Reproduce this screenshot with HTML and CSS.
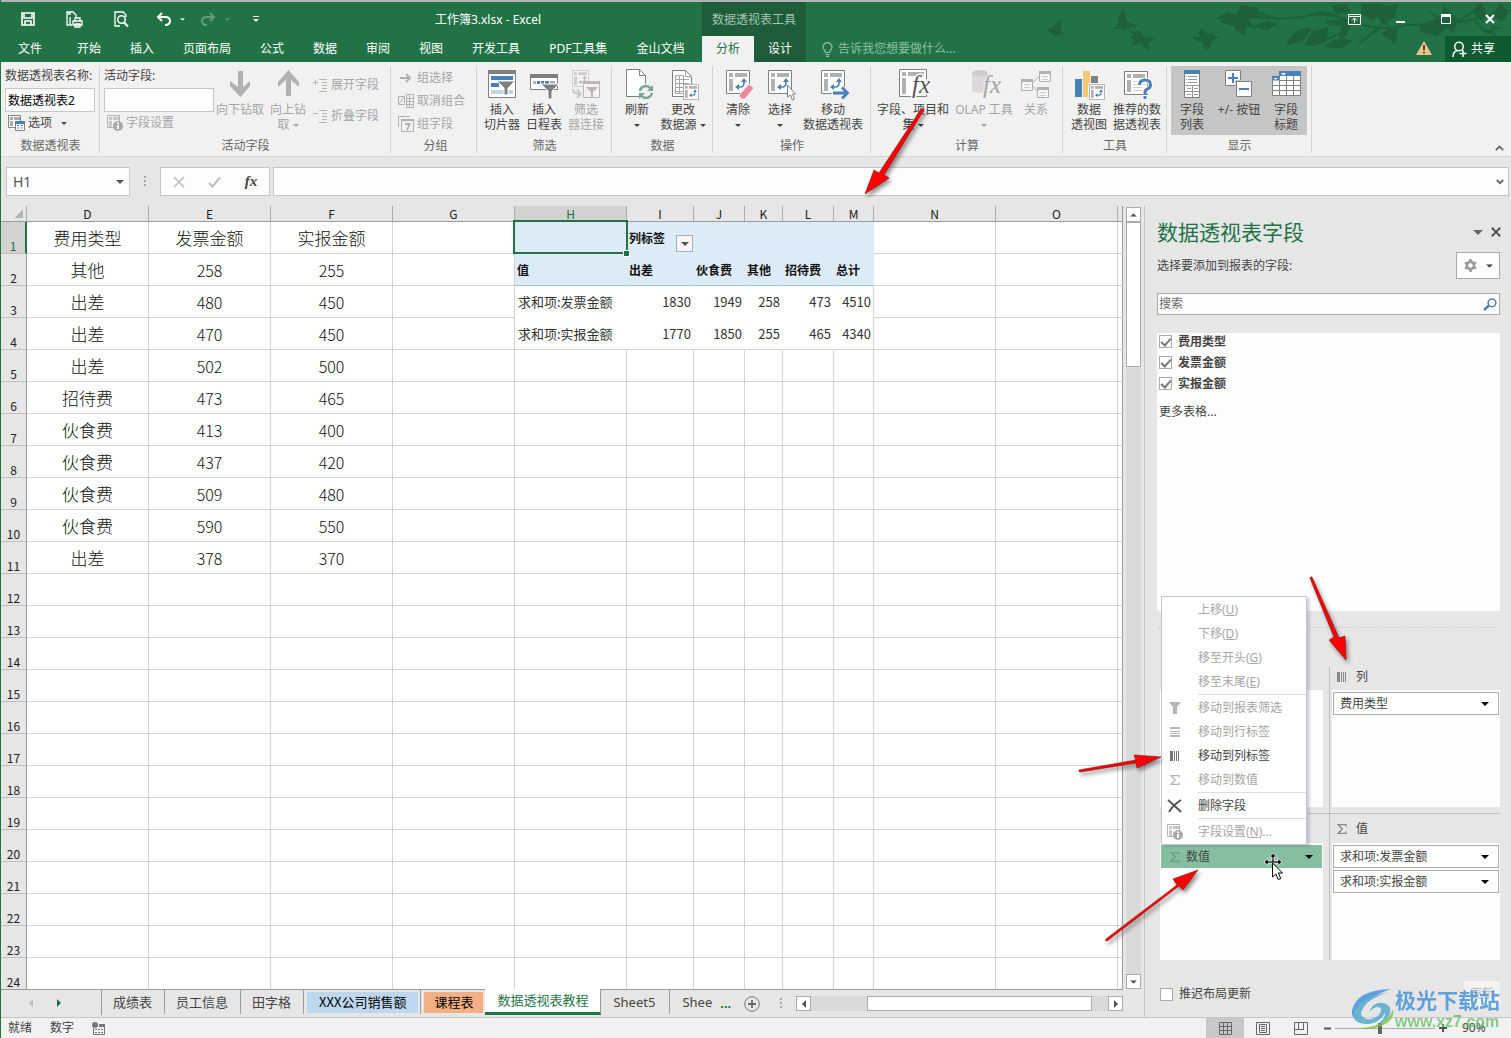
FILE: index.html
```html
<!DOCTYPE html>
<html lang="zh-CN">
<head>
<meta charset="utf-8">
<title>工作簿3.xlsx - Excel</title>
<link rel="stylesheet" href="styles.css">
</head>
<body>
<svg class="defs" width="0" height="0" aria-hidden="true">
  <symbol id="pivot" viewBox="0 0 24 24"><path d="M.5.5h23v23H.5z" fill="#fff" stroke="#808080"/><path d="M3 3h4v4H3zM9 3h12v4H9zM3 9h4v12H3z" fill="#b1b1b1"/><path d="M18 11v2q0 4-4 4h-3" fill="none" stroke="#4a80b8" stroke-width="1.6"/><path d="M18 8l3 4h-6zM9 17l4-3v6z" fill="#4a80b8"/></symbol>
  <symbol id="pivot-grey" viewBox="0 0 24 24"><path d="M.5.5h23v23H.5z" fill="#f3f1f3" stroke="#b9b5b9"/><path d="M3 3h4v4H3zM9 3h12v4H9zM3 9h4v12H3z" fill="#cfcbcf"/><path d="M18 11v2q0 4-4 4h-3" fill="none" stroke="#b9b5b9" stroke-width="1.6"/><path d="M18 8l3 4h-6zM9 17l4-3v6z" fill="#b9b5b9"/></symbol>
  <symbol id="down" viewBox="0 0 8 4"><path d="M0 0h8L4 4z" fill="currentColor"/></symbol>
  <symbol id="bars" viewBox="0 0 10 10"><path d="M0 0h3v10H0zM4 0h1v10H4zM6 0h1v10H6zM8 0h1v10H8z" fill="currentColor"/></symbol>
  <symbol id="sigma" viewBox="0 0 10 10"><path d="M9 2.500V.5H1L5.200 5 1 9.500h8v-2" fill="none" stroke="currentColor" stroke-width="1.300"/></symbol>
  <symbol id="info" viewBox="0 0 16 16"><path d="M.5.5h12v12H.5z" fill="none" stroke="#b5b5b5"/><path d="M2 2h3v3H2zM6 2h6v3H6zM2 6h3v6H2z" fill="#c9c5c9"/><circle cx="11" cy="11" r="5" fill="#a9a9a9"/><path d="M10 7.500h2v1.500h-2zM10 10h2v4h-2z" fill="#fff"/></symbol>
</svg>

<div class="window">
<header class="top">
  <svg class="deco" viewBox="0 0 480 60" aria-hidden="true">
    <g fill="#1d6039">
      <path d="M17 27q5-1 7-5 3-4 6-5-1 7 0 11l3 4-6 1-3 2-1-2-6-4z"/>
      <path d="M81 26q5 0 6-5 0-8 5-14 3 6 4 13 4-1 4 2l7 2-6 1-5 2-6 3 1-4q-5 2-10 0z"/>
      <path d="M97 27l6 3q3-2 6-1 3 6 6 7l10-1q-2 5-8 6l1 7q-6-1-9-7-5 3-10 2l6-5-6-2 3-3z"/>
      <path d="M162 35q5-1 7 1-2-6 0-9 4 0 7 5 5-1 7 2l6 1-6 2-2 2q-1 6-5 9-5-3-4-9-5 2-10-3z"/>
      <path d="M185 16l12-6 8 3 5-10 7 1 10 11-10 2 7 10-13-5 3 11-10-8-7-2-6-5z"/>
      <path d="M214 4l12 2 4 8-10-2zM222 24l14-5 10 3-10 7zM204 20l12 2-3 12-9-6z"/>
      <path d="M273 43l8-14 16-4-1 14-12 5zM256 41q5-14 24-16-2 15-24 18zM293 44q14-12 28-5-10 11-28 5zM300 4l15-2 5 9-14 1zM311 24q-5 10-2 14 14-9 9-20-15-2-25 2 7 6 16 3z"/>
      <path d="M330 2h22l-2 10-9 6-11-6zM349 5l18-3-3 13-14 8zM350 32l10-8 7 4-3 14zM390 22l19-6 13 4-16 14-18-4zM396 8l17 9-2-14 15 13-3 16zM440 9l10-8 5 8-3 12zM460 14l10-13 8 10-7 9zM452 28l14 7-6-12 12 4z"/>
    </g>
    <path d="M190 20q28-6 50-4t44-4q20 0 42 9t50 2q30 0 52-3t52-12M240 15q-15-6-25-7M286 10q15-1 34 11M320 22q-16 15-34 18M350 24l-22 18M426 20l22-14M444 20q8 8 14 12M340 2q6 14 18 22" fill="none" stroke="#1d6039" stroke-width="2"/>
  </svg>
  <div class="titlebar">
    <div class="titlebar-left">
      <div class="qat">
        <button aria-label="保存"><svg width="14" height="14" viewBox="0 0 14 14"><path d="M1 1h12v12H1zM3 1v5h8V1M4 13V9h6v4" fill="none" stroke="#fff" stroke-width="1.600"/></svg></button>
        <button aria-label="快速打印"><svg width="17" height="17" viewBox="0 0 17 17"><path d="M3 14H1V1h6l3 3v3M4 1v2H2M4 6v8h2M7 10h9v4H7zM9 10V7h5v3M9 13h5v3H9z" fill="none" stroke="#fff" stroke-width="1.300"/></svg></button>
        <button aria-label="打印预览"><svg width="15" height="17" viewBox="0 0 15 17"><path d="M12 6V4L9 1H1v14h5" fill="none" stroke="#fff" stroke-width="1.300"/><circle cx="7.500" cy="8.500" r="3.800" fill="none" stroke="#fff" stroke-width="1.500"/><path d="M10 11.500l4 4" stroke="#fff" stroke-width="2.200"/></svg></button>
        <button aria-label="撤消" class="pair"><svg width="15" height="14" viewBox="0 0 15 14"><path d="M2 5h7q5 0 5 4t-5 4M6 1L2 5l4 4" fill="none" stroke="#fff" stroke-width="2"/></svg><svg width="5" height="3" viewBox="0 0 8 4"><use href="#down"/></svg></button>
        <button aria-label="恢复" class="pair faded"><svg width="15" height="14" viewBox="0 0 15 14"><path d="M13 5H6Q1 5 1 9t5 4M9 1l4 4-4 4" fill="none" stroke="#fff" stroke-width="2"/></svg><svg width="5" height="3" viewBox="0 0 8 4"><use href="#down"/></svg></button>
        <button aria-label="自定义快速访问工具栏"><svg width="6" height="7" viewBox="0 0 6 7"><path d="M0 0h6v1H0zM0 3h6L3 6z" fill="#fff"/></svg></button>
      </div>
      <div class="doc-title">工作簿3.xlsx - Excel</div>
    </div>
    <div class="ctx-title">数据透视表工具</div>
    <div class="win-buttons">
      <button aria-label="功能区显示选项"><svg width="13" height="11" viewBox="0 0 13 11"><path d="M.5.500h12v10H.5zM0 2.500h13M6.500 9V4M4 6.500L6.500 4 9 6.500" fill="none" stroke="#fff"/></svg></button>
      <button aria-label="最小化"><svg width="9" height="11" viewBox="0 0 9 11"><path d="M0 7h9v2H0z" fill="#fff"/></svg></button>
      <button aria-label="最大化"><svg width="10" height="10" viewBox="0 0 10 10"><path d="M.5.500h9v9h-9z" fill="none" stroke="#fff"/><path d="M0 0h10v3H0z" fill="#fff"/></svg></button>
      <button aria-label="关闭"><svg width="10" height="10" viewBox="0 0 10 10"><path d="M1 1l8 8M9 1L1 9" stroke="#fff" stroke-width="2.200"/></svg></button>
    </div>
  </div>
  <nav class="tabs">
    <div class="tabs-main">
      <button class="file">文件</button><button>开始</button><button>插入</button><button>页面布局</button><button>公式</button><button>数据</button><button>审阅</button><button>视图</button><button>开发工具</button><button>PDF工具集</button><button>金山文档</button>
    </div>
    <div class="tabs-ctx"><button class="active">分析</button><button>设计</button></div>
    <button class="tellme"><svg width="11" height="15" viewBox="0 0 11 15"><path d="M3.500 10.500Q3.500 9 2 7.500A4.300 4.300 0 1 1 9 7.500Q7.500 9 7.500 10.500zM3.500 12.500h4M4 14.300h3" fill="none" stroke="#8fc0a2" stroke-width="1.200"/></svg>告诉我您想要做什么...</button>
    <svg class="warn" width="16" height="14" viewBox="0 0 16 14"><path d="M8 0l8 14H0z" fill="#f2c285"/><path d="M7 4h2v5H7zM7 10.500h2v2H7z" fill="#4a4a4a"/></svg>
    <button class="share"><svg width="15" height="17" viewBox="0 0 15 17"><circle cx="7" cy="5.500" r="4.300" fill="none" stroke="#fff" stroke-width="1.500"/><path d="M1 16q0-6 5-6.500M11 9v7M7.500 12.500h7" fill="none" stroke="#fff" stroke-width="1.500"/></svg>共享</button>
  </nav>
</header>

<section class="ribbon">
  <div class="group g-name">
    <div class="stack">
      <label for="ptname">数据透视表名称:</label>
      <input id="ptname" type="text" value="数据透视表2">
      <button class="small"><svg width="17" height="16" viewBox="0 0 17 16"><path d="M.5.500h12v12H.5z" fill="#fff" stroke="#808080"/><path d="M2 2h3v3H2zM6 2h6v3H6zM2 6h3v5H2z" fill="#aaa"/><path d="M7.500 6.500h9v9h-9z" fill="#fff" stroke="#808080"/><path d="M7 6h10v3H7z" fill="#4a80b8"/><path d="M9 10.500h2M12.500 10.500h2M9 13h2M12.500 13h2" stroke="#4a80b8"/></svg>选项<svg class="caret" width="6" height="3" viewBox="0 0 8 4"><use href="#down"/></svg></button>
    </div>
    <h2>数据透视表</h2>
  </div>
  <div class="group g-active">
    <div class="items">
      <div class="stack">
        <label for="actfield">活动字段:</label>
        <input id="actfield" type="text">
        <button class="small off indent"><svg width="16" height="16"><use href="#info"/></svg>字段设置</button>
      </div>
      <button class="big off w48"><svg width="32" height="32" viewBox="0 0 32 32"><path d="M14 2h5v16l7-6v5L16.500 28 6 17v-5l8 6z" fill="#b1b1b1"/></svg>向下钻取</button>
      <button class="big off w48"><svg width="32" height="32" viewBox="0 0 32 32"><path d="M14 27h5V11l8 7v-5L16.500 1 6 13v5l8-7z" fill="#b1b1b1"/></svg>向上钻<br>取 <svg class="caret" width="6" height="3" viewBox="0 0 8 4"><use href="#down"/></svg></button>
      <div class="pairs">
        <button class="small off"><svg width="15" height="14" viewBox="0 0 15 14"><path d="M0 4.500h5M2.500 2v5M6 1.500h8M9 4.500h5M9 7.500h5M9 10.500h5M6 13.500h8" fill="none" stroke="#b5b5b5"/></svg>展开字段</button>
        <button class="small off"><svg width="15" height="14" viewBox="0 0 15 14"><path d="M0 4.500h5M6 1.500h8M9 4.500h5M9 7.500h5M9 10.500h5M6 13.500h8" fill="none" stroke="#b5b5b5"/></svg>折叠字段</button>
      </div>
    </div>
    <h2>活动字段</h2>
  </div>
  <div class="group g-group">
    <div class="stack three">
      <button class="small off"><svg width="16" height="14" viewBox="0 0 16 14"><path d="M2 7h9M8 3l4 4-4 4" fill="none" stroke="#b1b1b1" stroke-width="2"/></svg>组选择</button>
      <button class="small off"><svg width="16" height="14" viewBox="0 0 16 14"><path d="M.5 2.500h6v8h-6zM1 10l5-7M8.500.500h7v13h-7zM8 4.500h8M8 7.500h8M8 10.500h8M11.500 1v12" fill="none" stroke="#b1b1b1"/></svg>取消组合</button>
      <button class="small off"><svg width="16" height="16" viewBox="0 0 16 16"><path d="M.5 11V.5H12M3.500 4.500h12v11h-12z" fill="none" stroke="#b1b1b1"/><path d="M3 3h13v2H3z" fill="#b1b1b1"/><path d="M7 8h4.500L9 14" fill="none" stroke="#a5a5a5" stroke-width="1.500"/></svg>组字段</button>
    </div>
    <h2>分组</h2>
  </div>
  <div class="group g-filter">
    <div class="items">
      <button class="big w42"><svg width="32" height="32" viewBox="0 0 32 32"><path d="M2.500 1.500h27v27h-27z" fill="#fff" stroke="#808080"/><path d="M2 1h28v4H2z" fill="#808080"/><path d="M5 7h22v4H5zM5 14h8v4H5z" fill="#4a80b8"/><path d="M5 21h22v4H5z" fill="#bdd3e8"/><path d="M11 12h18l-7 7v7h-4v-7z" fill="#808080" stroke="#fff"/></svg>插入<br>切片器</button>
      <button class="big w42"><svg width="32" height="32" viewBox="0 0 32 32"><path d="M2.500 5.500h27v15h-27z" fill="#fff" stroke="#808080"/><path d="M2 5h28v4H2z" fill="#808080"/><path d="M5 12h3v3H5zM22 12h5v3h-5z" fill="#b1b1b1"/><path d="M9 12h3v3H9zM13 12h3v3h-3zM17 12h4v3h-4z" fill="#4a80b8"/><path d="M13 15h18l-7 7v8h-4v-8z" fill="#808080" stroke="#fff"/></svg>插入<br>日程表</button>
      <button class="big off w42"><svg width="32" height="32" viewBox="0 0 32 32"><use href="#pivot-grey" x="2" y="1" width="17" height="17"/><path d="M13.500 12.500h16v16h-16z" fill="#f3f1f3" stroke="#b9b5b9"/><path d="M13 12h17v3H13z" fill="#b9b5b9"/><path d="M16 18h12l-5 5v5h-2v-5z" fill="#b9b5b9"/><path d="M3 20q0 5 7 5M7 21l4 4-4 4" fill="none" stroke="#c9c5c9" stroke-width="2"/></svg>筛选<br>器连接</button>
    </div>
    <h2>筛选</h2>
  </div>
  <div class="group g-data">
    <div class="items">
      <button class="big w44"><svg width="32" height="32" viewBox="0 0 32 32"><path d="M5.500.500h13l6 6v21h-19z" fill="#fff" stroke="#808080"/><path d="M18.500.500v6h6" fill="none" stroke="#808080"/><circle cx="25" cy="23" r="8" fill="#f1f1f1"/><path d="M19 22a6 6 0 0 1 11-2M31 24a6 6 0 0 1-11 2" fill="none" stroke="#76a797" stroke-width="2.400"/><path d="M32 16v6h-6zM18 30v-6h6z" fill="#76a797"/></svg>刷新<br><svg class="caret" width="6" height="3" viewBox="0 0 8 4"><use href="#down"/></svg></button>
      <button class="big w48"><svg width="32" height="32" viewBox="0 0 32 32"><path d="M5.500 1.500h13l6 6v20h-19z" fill="#fff" stroke="#808080"/><path d="M18.500 1.500v6h6M8.500 6.500h8v18h-8zM8 10.500h14M8 14.500h14M8 18.500h12M8 22.500h8M12.500 6v18" fill="none" stroke="#a5a5a5"/><use href="#pivot" x="16" y="15" width="16" height="16"/></svg>更改<br>数据源 <svg class="caret" width="6" height="3" viewBox="0 0 8 4"><use href="#down"/></svg></button>
    </div>
    <h2>数据</h2>
  </div>
  <div class="group g-ops">
    <div class="items">
      <button class="big w42"><svg width="32" height="32" viewBox="0 0 32 32"><use href="#pivot" x="4" y="1" width="24" height="24"/><path d="M17 26l10-11 5 4-9 11h-4z" fill="#e8889a" stroke="#f1f1f1"/></svg>清除<br><svg class="caret" width="6" height="3" viewBox="0 0 8 4"><use href="#down"/></svg></button>
      <button class="big w42"><svg width="32" height="32" viewBox="0 0 32 32"><use href="#pivot" x="4" y="1" width="24" height="24"/><path d="M23.500 16v12l3-2 2 5 2-1-2-5h3z" fill="#fff" stroke="#808080"/></svg>选择<br><svg class="caret" width="6" height="3" viewBox="0 0 8 4"><use href="#down"/></svg></button>
      <button class="big w64"><svg width="32" height="32" viewBox="0 0 32 32"><use href="#pivot" x="4" y="1" width="24" height="24"/><path d="M15 24h14M24 18l6 6-6 6" fill="none" stroke="#f1f1f1" stroke-width="5"/><path d="M16 24h14M25 18.500l5.500 5.500-5.500 5.500" fill="none" stroke="#4a80b8" stroke-width="2.800"/></svg>移动<br>数据透视表</button>
    </div>
    <h2>操作</h2>
  </div>
  <div class="group g-calc">
    <div class="items">
      <button class="big w76"><svg width="32" height="32" viewBox="0 0 32 32"><path d="M2.500.500h27v27h-27z" fill="#fff" stroke="#808080"/><path d="M5 3h4v4H5zM11 3h16v4H11zM5 9h4v16H5z" fill="#b1b1b1"/><text x="15" y="24" class="fx" fill="#555" stroke="#fff" stroke-width="3" paint-order="stroke">fx</text></svg>字段、项目和<br>集 <svg class="caret" width="6" height="3" viewBox="0 0 8 4"><use href="#down"/></svg></button>
      <button class="big off w66"><svg width="32" height="32" viewBox="0 0 32 32"><path d="M4 4v17a8 3 0 0 0 16 0V4z" fill="#dcd8dc"/><ellipse cx="12" cy="4" rx="8" ry="3" fill="#cfcbcf"/><text x="15" y="24" class="fx" fill="#a5a5a5" stroke="#f1f1f1" stroke-width="2" paint-order="stroke">fx</text></svg>OLAP 工具<br><svg class="caret" width="6" height="3" viewBox="0 0 8 4"><use href="#down"/></svg></button>
      <button class="big off w38"><svg width="32" height="32" viewBox="0 0 32 32"><path d="M12 14l7-6M12 16l6 7" stroke="#b1b1b1"/><path d="M1.500 10.500h11v11h-11zM19.500 2.500h11v10h-11zM17.500 18.500h11v10h-11z" fill="#f5f3f5" stroke="#b1b1b1"/><path d="M1 10h12v3H1zM19 2h12v3H19zM17 18h12v3H17z" fill="#b1b1b1"/><path d="M4 15.500h6M4 18.500h6M22 7.500h6M22 10.500h6M20 23.500h6M20 26.500h6" stroke="#cfcbcf"/></svg>关系</button>
    </div>
    <h2>计算</h2>
  </div>
  <div class="group g-tools">
    <div class="items">
      <button class="big w44"><svg width="32" height="32" viewBox="0 0 32 32"><path d="M2 10h7v18H2z" fill="#4a80b8"/><path d="M10 2h7v26h-7z" fill="#f0c878"/><path d="M18 7h7v8h-7z" fill="#808080"/><path d="M15 14h17v18H15z" fill="#f1f1f1"/><use href="#pivot" x="16" y="15" width="16" height="16"/></svg>数据<br>透视图</button>
      <button class="big w52"><svg width="32" height="32" viewBox="0 0 32 32"><path d="M3.500 2.500h23v23h-23z" fill="#fff" stroke="#808080"/><path d="M6 5h4v4H6zM12 5h12v4H12zM6 11h4v12H6z" fill="#b1b1b1"/><path d="M12 12.500h12M12 15.500h12M12 18.500h9M12 21.500h9" stroke="#cfcfcf"/><path d="M18.500 16q0-5 5.500-5t5.500 5q0 3-3 5t-2.500 4M24 27.500v3" fill="none" stroke="#fff" stroke-width="5"/><path d="M18.500 16q0-5 5.500-5t5.500 5q0 3-3 4t-2.500 5M24 27v3" fill="none" stroke="#4a80b8" stroke-width="3"/></svg>推荐的数<br>据透视表</button>
    </div>
    <h2>工具</h2>
  </div>
  <div class="group g-show">
    <div class="items pressed">
      <button class="big w42"><svg width="32" height="32" viewBox="0 0 32 32"><path d="M8.500 1.500h15v27h-15z" fill="#fff" stroke="#808080"/><path d="M8 1h16v4H8z" fill="#4a80b8"/><path d="M10 7.500h1M12 7.500h9M10 10.500h1M12 10.500h9M10 13.500h1M12 13.500h9M9 16.500h14M9 22.500h14M16.500 17v11M11 19.500h4M18 19.500h4M11 25.500h4M18 25.500h4" stroke="#999"/></svg>字段<br>列表</button>
      <button class="big w52"><svg width="32" height="32" viewBox="0 0 32 32"><path d="M2.500 1.500h15v15h-15z" fill="#fff" stroke="#808080"/><path d="M12 11h18v19H12z" fill="#c5c5c5"/><path d="M13.500 12.500h15v15h-15z" fill="#fff" stroke="#808080"/><path d="M5 9h10M10 4v10M16 20h10" stroke="#4a80b8" stroke-width="2"/></svg>+/- 按钮</button>
      <button class="big w42"><svg width="32" height="32" viewBox="0 0 32 32"><path d="M9 2h22v5H9zM2 7h7v5H2z" fill="#4a80b8"/><path d="M2.500 11.500h28v15h-28zM9 7h21v5H9z" fill="#fff"/><path d="M2.500 11v15.500h28V7M2 16.500h28M2 21.500h28M9.500 7v19M16.500 7v19M23.500 7v19M9 11.500h21" fill="none" stroke="#808080"/><path d="M11 4h5l-2.500 2.500zM3.500 9h4l-2 2z" fill="#fff"/></svg>字段<br>标题</button>
    </div>
    <h2>显示</h2>
  </div>
  <button class="collapse" aria-label="折叠功能区"><svg width="9" height="6" viewBox="0 0 9 6"><path d="M.8 5.200L4.500 1.500l3.700 3.700" fill="none" stroke="#666" stroke-width="1.800"/></svg></button>
</section>

<section class="formula">
  <div class="namebox"><input type="text" aria-label="名称框" value="H1"><button aria-label="展开名称框"><svg width="8" height="4"><use href="#down"/></svg></button></div>
  <div class="grip"></div>
  <div class="fbuttons">
    <button aria-label="取消"><svg width="12" height="12" viewBox="0 0 12 12"><path d="M1 1l10 10M11 1L1 11" stroke="#bdbdbd" stroke-width="1.600"/></svg></button>
    <button aria-label="输入"><svg width="13" height="12" viewBox="0 0 13 12"><path d="M1 7l3.500 3.500L12 1.500" fill="none" stroke="#bdbdbd" stroke-width="2"/></svg></button>
    <button class="fxbtn">fx</button>
  </div>
  <div class="fbox"><input type="text" aria-label="编辑栏"><button aria-label="展开编辑栏"><svg width="8" height="6" viewBox="0 0 8 6"><path d="M.8 1l3.200 3.200L7.200 1" fill="none" stroke="#666" stroke-width="1.800"/></svg></button></div>
</section>

<main class="work">
  <div class="book">
    <div class="sheet">
      <div class="grid">
      <table>
        <colgroup><col class="c-num"><col class="c-122"><col class="c-122"><col class="c-122"><col class="c-122"><col class="c-h"><col class="c-i"><col class="c-j"><col class="c-k"><col class="c-j"><col class="c-m"><col class="c-122"><col class="c-122"><col></colgroup>
        <thead><tr><th class="corner"></th><th>D</th><th>E</th><th>F</th><th>G</th><th class="sel">H</th><th>I</th><th>J</th><th>K</th><th>L</th><th>M</th><th>N</th><th>O</th><th></th></tr></thead>
        <tbody>
        <tr><th class="sel">1</th><td>费用类型</td><td>发票金额</td><td>实报金额</td><td></td><td class="ph cell-sel"></td><td class="ph">列标签<button class="filter" aria-label="筛选列标签"><svg width="8" height="4"><use href="#down"/></svg></button></td><td class="ph"></td><td class="ph"></td><td class="ph"></td><td class="ph"></td><td></td><td></td><td></td></tr>
        <tr><th>2</th><td>其他</td><td class="n">258</td><td class="n">255</td><td></td><td class="ph line">值</td><td class="ph line">出差</td><td class="ph line">伙食费</td><td class="ph line">其他</td><td class="ph line">招待费</td><td class="ph line">总计</td><td></td><td></td><td></td></tr>
        <tr><th>3</th><td>出差</td><td class="n">480</td><td class="n">450</td><td></td><td class="pl">求和项:发票金额</td><td class="pv">1830</td><td class="pv">1949</td><td class="pv">258</td><td class="pv">473</td><td class="pv end">4510</td><td></td><td></td><td></td></tr>
        <tr class="last"><th>4</th><td>出差</td><td class="n">470</td><td class="n">450</td><td></td><td class="pl">求和项:实报金额</td><td class="pv">1770</td><td class="pv">1850</td><td class="pv">255</td><td class="pv">465</td><td class="pv end">4340</td><td></td><td></td><td></td></tr>
        <tr><th>5</th><td>出差</td><td class="n">502</td><td class="n">500</td><td></td><td></td><td></td><td></td><td></td><td></td><td></td><td></td><td></td><td></td></tr>
        <tr><th>6</th><td>招待费</td><td class="n">473</td><td class="n">465</td><td></td><td></td><td></td><td></td><td></td><td></td><td></td><td></td><td></td><td></td></tr>
        <tr><th>7</th><td>伙食费</td><td class="n">413</td><td class="n">400</td><td></td><td></td><td></td><td></td><td></td><td></td><td></td><td></td><td></td><td></td></tr>
        <tr><th>8</th><td>伙食费</td><td class="n">437</td><td class="n">420</td><td></td><td></td><td></td><td></td><td></td><td></td><td></td><td></td><td></td><td></td></tr>
        <tr><th>9</th><td>伙食费</td><td class="n">509</td><td class="n">480</td><td></td><td></td><td></td><td></td><td></td><td></td><td></td><td></td><td></td><td></td></tr>
        <tr><th>10</th><td>伙食费</td><td class="n">590</td><td class="n">550</td><td></td><td></td><td></td><td></td><td></td><td></td><td></td><td></td><td></td><td></td></tr>
        <tr><th>11</th><td>出差</td><td class="n">378</td><td class="n">370</td><td></td><td></td><td></td><td></td><td></td><td></td><td></td><td></td><td></td><td></td></tr>
        <tr><th>12</th><td></td><td></td><td></td><td></td><td></td><td></td><td></td><td></td><td></td><td></td><td></td><td></td><td></td></tr>
        <tr><th>13</th><td></td><td></td><td></td><td></td><td></td><td></td><td></td><td></td><td></td><td></td><td></td><td></td><td></td></tr>
        <tr><th>14</th><td></td><td></td><td></td><td></td><td></td><td></td><td></td><td></td><td></td><td></td><td></td><td></td><td></td></tr>
        <tr><th>15</th><td></td><td></td><td></td><td></td><td></td><td></td><td></td><td></td><td></td><td></td><td></td><td></td><td></td></tr>
        <tr><th>16</th><td></td><td></td><td></td><td></td><td></td><td></td><td></td><td></td><td></td><td></td><td></td><td></td><td></td></tr>
        <tr><th>17</th><td></td><td></td><td></td><td></td><td></td><td></td><td></td><td></td><td></td><td></td><td></td><td></td><td></td></tr>
        <tr><th>18</th><td></td><td></td><td></td><td></td><td></td><td></td><td></td><td></td><td></td><td></td><td></td><td></td><td></td></tr>
        <tr><th>19</th><td></td><td></td><td></td><td></td><td></td><td></td><td></td><td></td><td></td><td></td><td></td><td></td><td></td></tr>
        <tr><th>20</th><td></td><td></td><td></td><td></td><td></td><td></td><td></td><td></td><td></td><td></td><td></td><td></td><td></td></tr>
        <tr><th>21</th><td></td><td></td><td></td><td></td><td></td><td></td><td></td><td></td><td></td><td></td><td></td><td></td><td></td></tr>
        <tr><th>22</th><td></td><td></td><td></td><td></td><td></td><td></td><td></td><td></td><td></td><td></td><td></td><td></td><td></td></tr>
        <tr><th>23</th><td></td><td></td><td></td><td></td><td></td><td></td><td></td><td></td><td></td><td></td><td></td><td></td><td></td></tr>
        <tr><th>24</th><td></td><td></td><td></td><td></td><td></td><td></td><td></td><td></td><td></td><td></td><td></td><td></td><td></td></tr>
        </tbody>
      </table>
      </div>
      <div class="vscroll">
        <button aria-label="向上滚动"><svg class="flip" width="7" height="4" viewBox="0 0 8 4"><use href="#down"/></svg></button>
        <div class="track"><div class="thumb"></div></div>
        <button aria-label="向下滚动"><svg width="7" height="4" viewBox="0 0 8 4"><use href="#down"/></svg></button>
      </div>
    </div>
    <div class="sheetbar">
      <div class="nav">
        <button aria-label="上一张"><svg width="4" height="8" viewBox="0 0 4 8"><path d="M4 0v8L0 4z" fill="#bdbdbd"/></svg></button>
        <button aria-label="下一张"><svg width="4" height="8" viewBox="0 0 4 8"><path d="M0 0v8l4-4z" fill="#1e6b3e"/></svg></button>
      </div>
      <button class="st">成绩表</button><button class="st">员工信息</button><button class="st">田字格</button>
      <button class="st blue"><span>XXX公司销售额</span></button><button class="st orange"><span>课程表</span></button>
      <button class="st current">数据透视表教程</button><button class="st plain">Sheet5</button><button class="st cut">Shee</button>
      <button class="more">...</button>
      <button class="add" aria-label="新工作表"><svg width="16" height="16" viewBox="0 0 16 16"><circle cx="8" cy="8" r="7.300" fill="none" stroke="#777"/><path d="M4 8h8M8 4v8" stroke="#666" stroke-width="1.800"/></svg></button>
      <div class="grip"></div>
      <div class="hscroll">
        <button aria-label="向左滚动"><svg width="4" height="8" viewBox="0 0 4 8"><path d="M4 0v8L0 4z" fill="#555"/></svg></button>
        <div class="track"><div class="thumb"></div></div>
        <button aria-label="向右滚动"><svg width="4" height="8" viewBox="0 0 4 8"><path d="M0 0v8l4-4z" fill="#555"/></svg></button>
      </div>
    </div>
  </div>

  <aside class="pane">
    <div class="pane-head"><h1>数据透视表字段</h1>
      <button aria-label="任务窗格选项"><svg width="10" height="5" viewBox="0 0 8 4"><use href="#down"/></svg></button>
      <button aria-label="关闭窗格"><svg width="10" height="10" viewBox="0 0 10 10"><path d="M.8.800l8.400 8.400M9.200.800L.8 9.200" stroke="#555" stroke-width="2"/></svg></button>
    </div>
    <div class="pane-sub"><span>选择要添加到报表的字段:</span>
      <button class="gear" aria-label="工具"><svg width="13" height="13" viewBox="0 0 13 13"><circle cx="6.500" cy="6.500" r="3.600" fill="none" stroke="#999" stroke-width="2.600"/><path d="M6.500 2V0M6.500 13v-2M1 3.500l1.800 1M12 3.500l-1.800 1M1 9.500l1.800-1M12 9.500l-1.800-1" stroke="#999" stroke-width="2.400"/></svg><svg width="7" height="4" viewBox="0 0 8 4"><use href="#down"/></svg></button>
    </div>
    <div class="search"><input type="text" placeholder="搜索" aria-label="搜索"><svg width="14" height="13" viewBox="0 0 14 13"><circle cx="9" cy="4.800" r="3.900" fill="none" stroke="#4a80b8" stroke-width="1.500"/><path d="M6 7.500L1 12" stroke="#4a80b8" stroke-width="2.400"/></svg></div>
    <div class="fields">
      <label><input type="checkbox" checked>费用类型</label>
      <label><input type="checkbox" checked>发票金额</label>
      <label><input type="checkbox" checked>实报金额</label>
      <a href="#">更多表格...</a>
    </div>
    <div class="dots"></div>
    <div class="areas">
      <section class="area left"><h3></h3><div class="drop"></div></section>
      <section class="area"><h3><svg width="10" height="10"><use href="#bars"/></svg>列</h3><div class="drop">
        <button class="field">费用类型<svg width="8" height="4"><use href="#down"/></svg></button></div></section>
      <section class="area left lower"><h3></h3><div class="drop">
        <div class="hot">
          <button class="field on"><svg class="sig" width="10" height="10"><use href="#sigma"/></svg>数值<svg width="8" height="4"><use href="#down"/></svg></button>
          <svg class="pointer" width="20" height="28" viewBox="0 0 20 28"><path d="M9 0l3.500 4H10v4h4V5.500L18 9l-4 3.500V10H4v2.500L0 9l4-3.500V8h4V4H5.500z" fill="#000" stroke="#fff" stroke-width=".8"/><path d="M8.500 10v14l3.300-3 2.500 5.500 2.500-1-2.500-5.500h4.200z" fill="#fff" stroke="#000"/></svg>
          <ul class="menu">
            <li class="off">上移(<u>U</u>)</li>
            <li class="off">下移(<u>D</u>)</li>
            <li class="off">移至开头(<u>G</u>)</li>
            <li class="off">移至末尾(<u>E</u>)</li>
            <li class="off sep"><svg width="12" height="12" viewBox="0 0 12 12"><path d="M0 0h12L8 5v7H4V5z" fill="#b5b5b5"/></svg>移动到报表筛选</li>
            <li class="off"><svg width="10" height="10" viewBox="0 0 10 10"><path d="M0 0h10v2H0zM0 4h10v1H0zM0 6h10v1H0zM0 8h10v2H0z" fill="#b9b9b9"/></svg>移动到行标签</li>
            <li><svg width="10" height="10"><use href="#bars"/></svg>移动到列标签</li>
            <li class="off"><svg width="10" height="10"><use href="#sigma"/></svg>移动到数值</li>
            <li class="sep"><svg width="16" height="14" viewBox="0 0 16 14"><path d="M1 1q6 5 13 12M14 1Q6 6 2 13" fill="none" stroke="#555" stroke-width="2"/></svg>删除字段</li>
            <li class="off sep"><svg width="16" height="16"><use href="#info"/></svg>字段设置(<u>N</u>)...</li>
          </ul>
        </div></div></section>
      <section class="area lower"><h3><svg width="10" height="10"><use href="#sigma"/></svg>值</h3><div class="drop">
        <button class="field">求和项:发票金额<svg width="8" height="4"><use href="#down"/></svg></button>
        <button class="field">求和项:实报金额<svg width="8" height="4"><use href="#down"/></svg></button></div></section>
    </div>
    <div class="defer"><label><input type="checkbox">推迟布局更新</label><button disabled>更新</button></div>
  </aside>
</main>

<footer class="status">
  <span>就绪</span><span>数字</span>
  <svg width="13" height="13" viewBox="0 0 13 13"><path d="M1.500 6v6.500h11v-10H7" fill="none" stroke="#777"/><circle cx="3" cy="3" r="3" fill="#777"/><path d="M7 2h6v3H7zM3 7h2v1H3zM6 7h2v1H6zM9 7h2v1H9zM3 10h2v1H3zM6 10h2v1H6zM9 10h2v1H9z" fill="#777"/></svg>
  <div class="views">
    <button class="on" aria-label="普通"><svg width="13" height="13" viewBox="0 0 13 13"><path d="M.5.500h12v12H.5zM0 4.500h13M0 8.500h13M4.500 0v13M8.500 0v13" fill="none" stroke="#666"/></svg></button>
    <button aria-label="页面布局"><svg width="14" height="13" viewBox="0 0 14 13"><path d="M.5.500h13v12H.5zM3.500 2.500h7v8h-7zM5 4.500h4M5 6.500h4M5 8.500h4" fill="none" stroke="#666"/></svg></button>
    <button aria-label="分页预览"><svg width="14" height="13" viewBox="0 0 14 13"><path d="M.5.500h13v12H.5zM4.500 0v7.500M9.500 0v7.500M0 7.500h10" fill="none" stroke="#666"/></svg></button>
  </div>
  <div class="zoom"><button aria-label="缩小"><svg width="7" height="7" viewBox="0 0 7 7"><path d="M0 2.500h7v2H0z" fill="#555"/></svg></button>
    <input type="range" min="0" max="100" value="45" aria-label="缩放">
    <button aria-label="放大"><svg width="8" height="8" viewBox="0 0 8 8"><path d="M0 3h8v2H0zM3 0h2v8H3z" fill="#555"/></svg></button>
    <output>90%</output></div>
</footer>

<svg class="arrows" width="1511" height="1038" viewBox="0 0 1511 1038" aria-hidden="true">
  <g fill="#f00" stroke="#7a1010" stroke-width=".6">
    <path d="M924 110l-40 65 5 3-24 16 9-24 5 3 42-64q3-1 3 1z"/>
    <path d="M1312 577l27 61 6-2 1 24-17-20 5-3-24-59q1-2 2-1z"/>
    <path d="M1079 770l57-10-2-5 27 2-24 11-1-5-56 9q-2-1-1-2z"/>
    <path d="M1106 939l71-54-4-6 25-9-15 20-4-4-72 55q-2 0-1-2z"/>
  </g>
</svg>
<div class="mark">
  <svg width="44" height="42" viewBox="0 0 44 42"><path d="M40 1Q6 2 1 22q-1 8 5 10Q8 12 40 1z" fill="#3b8ede"/><path d="M38 4Q12 12 10 26q2 6 10 5 8-2 10-8 1-4-4-4-5 1-8 6 4-12 14-10 9 2 7 10-3 10-16 14 12-8 11-14-6 10-16 11Q-2 36 4 22 14 8 38 4z" fill="#4da6c8"/><path d="M6 40q30 0 36-19Q44 33 30 38t-24 2z" fill="#7bc043"/></svg>
  <div><b>极光下载站</b><i>www.xz7.com</i></div>
</div>
</div>
</body>
</html>
```
FILE: styles.css
```css
* { box-sizing: border-box; margin: 0; padding: 0; }
body { font: 12px/16px "Noto Sans", "Noto Sans CJK SC", sans-serif; color: #444; background: #e6e6e6; }
button, input, output { font: inherit; color: inherit; }
button { background: none; border: 0; white-space: nowrap; }
svg { flex: none; }
input { border: 0; min-width: 0; outline: 0; }
.defs { position: absolute; }
.window { position: relative; display: flex; flex-direction: column; height: 100vh; min-height: 700px; border-left: 1px solid #217346; overflow: hidden; }

/* Title bar and ribbon tabs */
.top { position: relative; flex: none; background: #217346; color: #fff; border-top: 2px solid #b4b4b4; }
.deco { position: absolute; right: 0; top: 0; width: 480px; height: 60px; }
.titlebar, .tabs { position: relative; display: flex; }
.titlebar { height: 34px; }
.titlebar-left, .tabs-main { flex: none; width: 701px; display: flex; }
.qat { display: flex; align-items: center; width: 273px; padding-left: 20px; gap: 31px; }
.qat button { display: flex; align-items: center; }
.qat .pair { gap: 9px; }
.qat .pair + .pair { margin-left: -15px; }
.qat .pair:nth-child(4) { margin-left: -4px; }
.faded { opacity: .3; }
.qat button:last-child { margin-left: -8px; }
.doc-title { flex: 1; text-align: center; line-height: 35px; }
.ctx-title { width: 104px; background: #1e5c3a; color: #a3c4b0; text-align: center; line-height: 35px; }
.win-buttons { margin-left: auto; display: flex; align-items: center; }
.win-buttons button { width: 46px; height: 32px; display: grid; place-items: center; }
.win-buttons button:last-child { width: 42px; }
.tabs { height: 26px; }
.tabs button { line-height: 24px; }
.tabs-main button { padding: 0 14px 0 15px; }
.tabs-main .file { width: 61px; padding: 0 3px 0 0; }
.tabs-ctx { display: flex; flex: none; width: 104px; background: #1e5c3a; }
.tabs-ctx button { flex: 1; }
.tabs-ctx .active { background: #f1f1f1; color: #217346; }
.tabs .tellme { display: flex; align-items: center; gap: 5px; padding-left: 16px; color: #8fc0a2; }
.warn { margin: 5px 13px 0 auto; }
.tabs .share { display: flex; align-items: center; gap: 4px; width: 66px; padding-left: 7px; background: #0f5a30; }

/* Ribbon */
.ribbon { flex: none; position: relative; display: flex; height: 95px; padding-top: 4px; background: #f1f1f1; border-bottom: 1px solid #d4d4d4; }
.group { flex: none; position: relative; display: flex; flex-direction: column; justify-content: space-between; height: 88px; padding: 0 4px; }
.group::after { content: ""; position: absolute; right: 0; top: 0; bottom: 1px; width: 1px; background: #d4d4d4; }
.group h2 { font-weight: normal; font-size: 12px; line-height: 16px; height: 16px; text-align: center; color: #666; }
.g-name { width: 99px; }
.g-active { width: 291px; }
.g-group { width: 86px; padding-left: 7px; }
.g-filter { width: 135px; }
.g-data { width: 101px; padding: 0 3px; }
.g-ops { width: 158px; }
.g-calc { width: 192px; }
.g-tools { width: 104px; }
.g-show { width: 145px; }
.items { display: flex; height: 69px; }
.stack { display: flex; flex-direction: column; align-items: stretch; padding-top: 2px; }
.stack label { height: 20px; line-height: 16px; white-space: nowrap; }
.stack input { height: 24px; padding: 0 2px; border: 1px solid #c6c6c6; background: #fdfdfd; color: #000; }
.g-active .stack { width: 110px; }
.g-active .stack input { width: 110px; }
.g-name .stack input { width: 90px; }
.small { display: flex; align-items: center; gap: 3px; height: 22px; line-height: 22px; text-align: left; }
.g-name .small { padding-left: 3px; }
.indent { padding-left: 3px; }
.three { padding-top: 0; }
.three .small { height: 23px; }
.small .caret { margin-left: 6px; }
.pairs { display: flex; flex-direction: column; gap: 9px; padding: 8px 0 0 1px; }
.big { line-height: 15px; padding-top: 3px; text-align: center; align-self: flex-start; }
.big > svg:first-child { display: block; margin: 0 auto 1px; overflow: visible; }
.caret { vertical-align: middle; }
.off { color: #a5a5a5; }
.w38 { width: 38px; } .w42 { width: 42px; } .w44 { width: 44px; } .w48 { width: 48px; } .w52 { width: 52px; }
.w64 { width: 64px; } .w66 { width: 66px; } .w76 { width: 76px; }
.pressed { background: #c5c5c5; width: 136px; }
.g-active .w48:nth-child(2) { margin-left: 2px; }
.fx { font: italic 25px "Liberation Serif", serif; }
.collapse { position: absolute; right: 7px; bottom: 5px; display: grid; }

/* Formula bar */
.formula { flex: none; display: flex; height: 49px; padding: 10px 2px 10px 5px; }
.namebox, .fbuttons, .fbox { display: flex; align-items: center; height: 29px; background: #fdfdfd; border: 1px solid #c6c6c6; }
.namebox { width: 124px; padding: 0 5px 0 6px; font-size: 14px; color: #555; }
.namebox input { flex: 1; background: none; }
.namebox button, .fbox button { display: grid; }
.grip { width: 2px; height: 11px; align-self: center; background: repeating-linear-gradient(#aaa 0 2px, transparent 2px 4px); }
.formula .grip { margin: 0 14px; }
.fbuttons { width: 110px; margin-right: 3px; justify-content: space-around; }
.fbuttons button { display: grid; place-items: center; }
.fxbtn { font: italic bold 15px "Liberation Serif", serif; }
.fbox { flex: 1; padding-right: 4px; }
.fbox input { flex: 1; background: none; }

/* Worksheet */
.work { flex: 1; min-height: 0; display: flex; }
.book { flex: 1; min-width: 0; display: flex; flex-direction: column; }
.sheet { flex: 1; min-height: 0; display: flex; padding-right: 3px; gap: 3px; }
.grid { flex: 1; min-width: 0; overflow: hidden; position: relative; }
table { width: 100%; table-layout: fixed; border-collapse: separate; border-spacing: 0; font-family: "Noto Sans CJK SC", sans-serif; }
.c-num { width: 26px; } .c-122 { width: 122px; } .c-h { width: 112px; } .c-i { width: 67px; } .c-j { width: 51px; } .c-k { width: 38px; } .c-m { width: 40px; }
thead th { height: 16px; font: 12px/15px "Noto Sans CJK SC", sans-serif; color: #222; border-right: 1px solid #ababab; border-bottom: 1px solid #9b9b9b; }
thead th:last-child, tbody td:last-child { border-right-color: #9b9b9b; }
th.sel { background: #d2d2d2; color: #217346; }
.corner { background: linear-gradient(135deg, transparent 50%, #b4b4b4 50%) 14px 4px / 8px 8px no-repeat; }
tbody th { height: 32px; font-weight: normal; font-size: 12px; line-height: 15px; vertical-align: bottom; color: #222; border-right: 1px solid #9b9b9b; border-bottom: 1px solid #c0c0c0; }
tbody th.sel { border-right: 2px solid #217346; }
td { height: 32px; background: #fff; border-right: 1px solid #d4d4d4; border-bottom: 1px solid #d4d4d4; text-align: center; font-size: 17px; line-height: 24px; color: #111; white-space: nowrap; font-weight: 300; }
td.n { font-size: 16px; }
td.ph { position: relative; background: #ddebf7; border-color: #ddebf7; font-size: 12px; font-weight: bold; text-align: left; padding-left: 2px; }
td.ph.line { border-bottom-color: #9bc2e6; }
td.pl, td.pv { font-size: 13px; border-color: #fff; font-weight: 400; color: #333; }
td.pl { text-align: left; padding-left: 3px; }
td.pv { text-align: right; padding-right: 2px; }
td.end { border-right-color: #d4d4d4; }
.last td { border-bottom-color: #d4d4d4; }
.cell-sel::before { content: ""; position: absolute; inset: -2px -2px -1px -2px; border: 2px solid #217346; z-index: 1; }
.cell-sel::after { content: ""; position: absolute; right: -3px; bottom: -3px; width: 5px; height: 5px; background: #217346; outline: 1px solid #fff; z-index: 2; }
.filter { position: absolute; left: 49px; bottom: 1px; width: 17px; height: 17px; display: grid; place-items: center; background: #f6f6f9; border: 1px solid #a6acb8; color: #555; }
.vscroll { width: 15px; padding-top: 1px; display: flex; flex-direction: column; }
.vscroll button, .hscroll button { flex: none; width: 15px; height: 15px; display: grid; place-items: center; background: #fff; border: 1px solid #ababab; color: #555; }
.flip { transform: scaleY(-1); }
.track { flex: 1; background: #dadada; }
.thumb { background: #fff; border: 1px solid #ababab; }
.vscroll .thumb { height: 145px; }
.sheetbar { flex: none; display: flex; height: 28px; margin-right: 21px; border-top: 1px solid #9b9b9b; font-size: 13px; line-height: 23px; }
.nav { display: flex; align-items: center; gap: 24px; width: 101px; height: 25px; padding-left: 28px; border-right: 1px solid #9b9b9b; }
.nav button { display: grid; }
.st { height: 24px; padding: 0 12px 0 11px; border-right: 1px solid #9b9b9b; }
.blue, .orange { padding: 2px 2px 2px 3px; color: #000; font-family: "Noto Sans CJK SC", sans-serif; line-height: 20px; }
.blue span, .orange span { display: block; height: 21px; padding: 0 10px; }
.blue span { background: #bdd7ee; padding: 0 12px; }
.orange span { background: #f4b084; }
.orange { border: 0; }
.current { width: 116px; padding: 0; color: #217346; background: #fff; border-bottom: 3px solid #217346; margin-top: -1px; height: 26px; }
.plain { padding: 0 14px 0 12px; }
.cut { border: 0; padding: 0 0 0 12px; }
.more { width: 27px; color: #217346; font-weight: bold; }
.add { width: 26px; display: grid; place-items: center; }
.sheetbar .grip { margin: 0 14px 0 15px; }
.hscroll { flex: 1; display: flex; padding-top: 6px; }
.hscroll .track { height: 15px; padding: 0 5% 0 17%; }
.hscroll .thumb { height: 15px; }

/* Field list pane */
.pane { flex: none; width: 367px; padding: 12px 11px 7px 12px; display: flex; flex-direction: column; border-left: 1px solid #c6c6c6; }
.pane-head { display: flex; align-items: center; height: 28px; gap: 8px; color: #666; }
.pane-head h1 { flex: 1; font-size: 21px; line-height: 28px; font-weight: normal; color: #217346; }
.pane-head button { display: grid; }
.pane-head button:last-child { margin-right: -1px; }
.pane-sub { display: flex; justify-content: space-between; align-items: center; height: 27px; margin-top: 6px; }
.gear { display: flex; align-items: center; justify-content: center; gap: 9px; width: 44px; height: 27px; background: #fdfdfd; border: 1px solid #ababab; }
.search { display: flex; align-items: center; height: 22px; margin-top: 14px; padding: 0 2px 0 1px; background: #fdfdfd; border: 1px solid #ababab; }
.search input { flex: 1; background: none; line-height: 16px; }
.search input::placeholder { color: #666; opacity: 1; }
.fields { flex: 1; margin-top: 18px; background: #fdfdfd; padding-left: 2px; }
.fields label { display: flex; align-items: center; height: 21px; gap: 6px; font-weight: bold; line-height: 16px; padding-bottom: 4px; }
.fields a { display: block; margin-top: 8px; color: #444; text-decoration: none; }
input[type="checkbox"] { appearance: none; flex: none; width: 13px; height: 13px; border: 1px solid #ababab; background: #fff; display: grid; place-items: center; }
input[type="checkbox"]:checked::before { content: ""; width: 4px; height: 8px; margin-bottom: 2px; border: solid #777; border-width: 0 2px 2px 0; transform: rotate(42deg); }
.dots { height: 1px; margin: 16px 0 39px 2px; background: repeating-linear-gradient(90deg, #bdbdbd 0 1px, transparent 1px 3px); }
.areas { display: grid; grid-template-columns: 1fr 1fr; margin-left: 3px; }
.area { padding: 0 0 6px 2px; }
.area.left { padding: 0 6px 6px 0; border-right: 1px solid #bdbdbd; }
.area h3 { display: flex; align-items: center; gap: 9px; height: 23px; padding: 0 0 4px 5px; font-size: 12px; font-weight: normal; line-height: 16px; color: #444; }
.area h3 svg { color: #888; }
.area.lower { border-top: 1px solid #bdbdbd; padding-bottom: 0; }
.area.lower h3 { height: 29px; padding-bottom: 0; }
.drop { height: 117px; background: #fdfdfd; padding: 2px 1px; display: flex; flex-direction: column; gap: 2px; }
.field { display: flex; align-items: center; width: 100%; height: 23px; padding: 0 9px 0 6px; border: 1px solid #ababab; text-align: left; background: #fff; }
.field svg:last-child { margin-left: auto; color: #000; }
.field.on { background: #86bfa0; border: 0; }
.sig { color: #6b9c82; margin: 0 6px 0 3px; }
.hot { position: relative; }
.pointer { position: absolute; left: 103px; top: 8px; }
.menu { position: absolute; left: 0; bottom: 100%; width: 146px; list-style: none; padding-top: 1px; background: #fff; border: 1px solid #c6c6c6; box-shadow: 3px 2px 2px rgba(100, 90, 140, .25); }
.menu li { position: relative; height: 24px; padding-left: 36px; line-height: 24px; white-space: nowrap; }
.menu li svg { position: absolute; left: 13px; top: 50%; translate: -50% -50%; color: #777; }
.menu .off svg { color: #b5b5b5; }
.menu .sep { margin-top: 2px; }
.menu .sep::before { content: ""; position: absolute; left: 36px; right: 0; top: -2px; height: 1px; background: #dcdcdc; }
.defer { display: flex; justify-content: space-between; align-items: center; height: 28px; margin: 20px 0 2px 3px; }
.defer label { display: flex; align-items: center; gap: 6px; }
.defer button { width: 36px; height: 27px; background: #f3f3f3; color: #bbb; }

/* Status bar */
.status { flex: none; display: flex; align-items: center; height: 21px; padding-left: 7px; gap: 18px; background: #f1f1f1; border-top: 1px solid #c6c6c6; }
.views { display: flex; margin-left: auto; align-self: stretch; }
.views button { width: 38px; display: grid; place-items: center; }
.views .on { background: #c8c8c8; }
.zoom { display: flex; align-items: center; width: 187px; margin-left: -14px; gap: 4px; }
.zoom button { display: grid; }
.zoom input { appearance: none; width: 100px; height: 12px; background: linear-gradient(#aaa, #aaa) 0 50% / 100% 1px no-repeat; }
.zoom input::-webkit-slider-thumb { appearance: none; width: 4px; height: 11px; background: #666; }
.zoom output { margin-left: 11px; }

/* Callouts and site mark lie over the window */
.arrows { position: absolute; left: -1px; top: 0; pointer-events: none; filter: drop-shadow(2px 3px 2px rgba(0, 0, 0, .45)); }
.mark { position: absolute; right: 11px; bottom: 6px; display: flex; opacity: .8; pointer-events: none; }
.mark div { display: flex; flex-direction: column; }
.mark b { font-size: 21px; line-height: 24px; color: #3f8fd8; }
.mark i { font: bold 16px/20px "Liberation Sans", sans-serif; color: #6cc070; }
```
